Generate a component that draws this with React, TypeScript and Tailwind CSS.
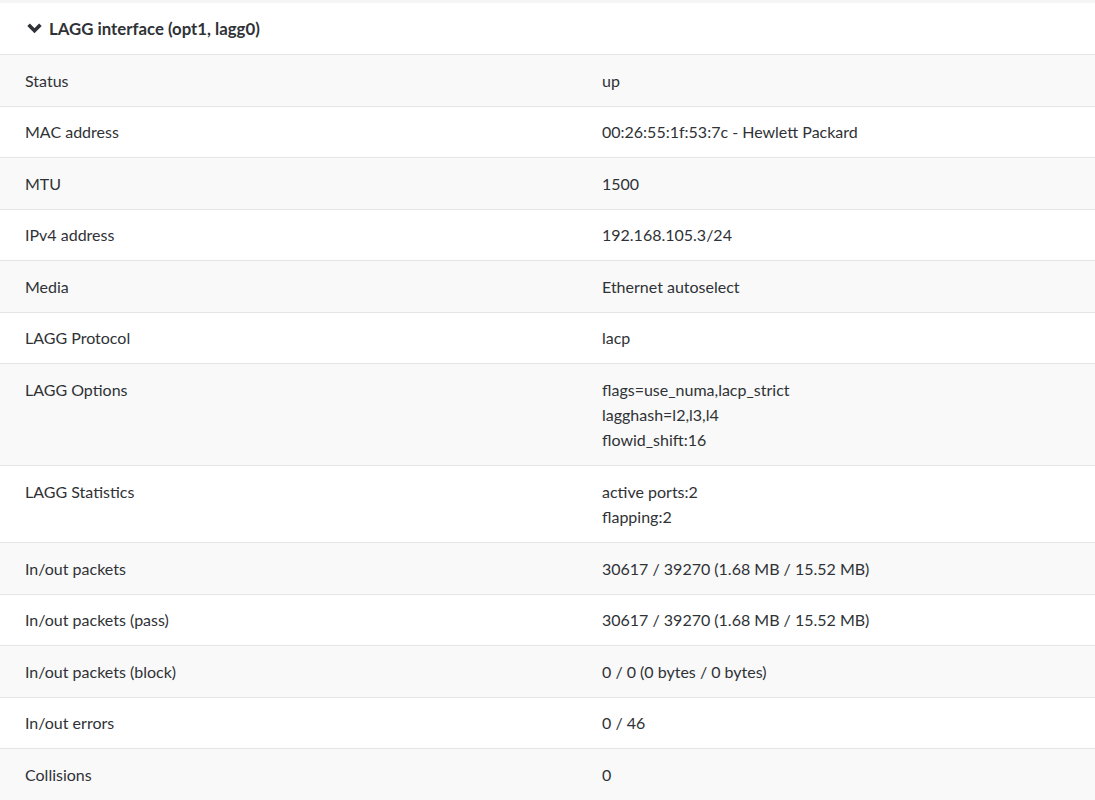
const rows: [string, string[]][] = [
  ['Status', ['up']],
  ['MAC address', ['00:26:55:1f:53:7c - Hewlett Packard']],
  ['MTU', ['1500']],
  ['IPv4 address', ['192.168.105.3/24']],
  ['Media', ['Ethernet autoselect']],
  ['LAGG Protocol', ['lacp']],
  ['LAGG Options', ['flags=use_numa,lacp_strict', 'lagghash=l2,l3,l4', 'flowid_shift:16']],
  ['LAGG Statistics', ['active ports:2', 'flapping:2']],
  ['In/out packets', ['30617 / 39270 (1.68 MB / 15.52 MB)']],
  ['In/out packets (pass)', ['30617 / 39270 (1.68 MB / 15.52 MB)']],
  ['In/out packets (block)', ['0 / 0 (0 bytes / 0 bytes)']],
  ['In/out errors', ['0 / 46']],
  ['Collisions', ['0']],
];

export default function App() {
  return (
    <div className="min-h-screen bg-white text-[#2f3236] text-[16px]" style={{ fontFamily: 'Lato, "Open Sans", sans-serif' }}>
      <div className="h-[3px] bg-[#f5f5f5]" />
      <div className="flex items-center gap-[7px] px-[27px] h-[52px] border-b border-[#e5e5e5] font-bold text-[16.8px]">
        <svg width="15" height="11" viewBox="0 0 15 11" className="shrink-0">
          <polyline points="1.6,1.8 7.5,7.8 13.4,1.8" fill="none" stroke="#2f3236" strokeWidth="3.6" strokeLinejoin="miter" />
        </svg>
        <span>LAGG interface (opt1, lagg0)</span>
      </div>
      {rows.map(([label, values], i) => (
        <div
          key={label}
          className={`grid grid-cols-[577px_1fr] border-b border-[#e5e5e5] py-[12.55px] leading-[25.4px] ${i % 2 === 0 ? 'bg-[#f9f9f9]' : 'bg-white'}`}
        >
          <div className="pl-[25px]">{label}</div>
          <div className="pl-[25px]">
            {values.map((v) => (
              <div key={v}>{v}</div>
            ))}
          </div>
        </div>
      ))}
    </div>
  );
}
